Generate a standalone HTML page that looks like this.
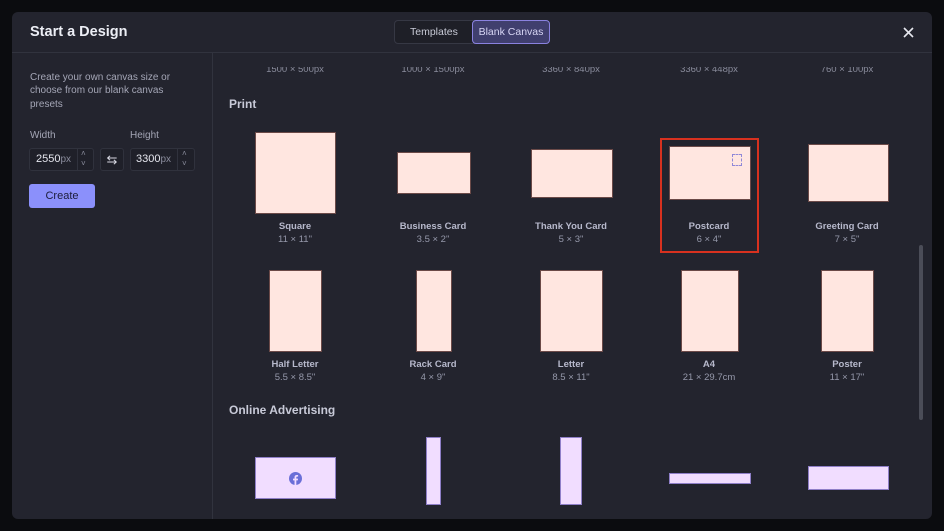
<!DOCTYPE html>
<html><head><meta charset="utf-8"><style>
*{margin:0;padding:0;box-sizing:border-box}
body{width:944px;height:531px;background:#0b0c0f;font-family:"Liberation Sans",sans-serif;position:relative;overflow:hidden}
.m{position:absolute;left:12px;top:12px;width:920px;height:507px;background:#23242e;border-radius:6px;overflow:hidden}
.a{position:absolute}
.r{position:absolute;background:#ffe6e0;border:1px solid #6b4a48}
.l{position:absolute;background:#f1ddff;border:1px solid #8f7fc8}
.n{position:absolute;width:138px;text-align:center;font-size:9.5px;font-weight:bold;color:#b7b9cc}
.d{position:absolute;width:138px;text-align:center;font-size:9.5px;color:#9598aa}
.t{position:absolute;width:138px;text-align:center;font-size:9.5px;color:#8a8c9c;top:-3px}
.in{position:absolute;top:148px;height:23px;border:1px solid #30323d;border-radius:3px;background:#1f2029;color:#e6e7ef;font-size:11px}
</style></head><body>
<div class="m"></div>
<div class="a" style="left:30px;top:24px;font-size:14.5px;font-weight:bold;color:#eceef5">Start a Design</div>
<div class="a" style="left:394px;top:20px;width:156px;height:24px;border:1px solid #363844;border-radius:4px;background:#1e1f27"></div>
<div class="a" style="left:410px;top:26px;font-size:10.5px;color:#c8cad6">Templates</div>
<div class="a" style="left:472px;top:20px;width:78px;height:24px;border:1px solid #8a82e0;border-radius:4px;background:#403f6e;color:#d8d6f5;font-size:10.5px;text-align:center;line-height:22px">Blank Canvas</div>
<svg class="a" style="left:903px;top:27px" width="11" height="11" viewBox="0 0 11 11"><path d="M1 1L10 10M10 1L1 10" stroke="#e6e7ef" stroke-width="1.6"/></svg>
<div class="a" style="left:12px;top:52px;width:920px;height:1px;background:#31333e"></div>
<div class="a" style="left:212px;top:53px;width:1px;height:466px;background:#31333e"></div>
<div class="a" style="left:30px;top:71px;width:150px;font-size:10px;line-height:13.3px;color:#a4a6b6">Create your own canvas size or choose from our blank canvas presets</div>
<div class="a" style="left:30px;top:130px;font-size:10px;color:#a4a6b6">Width</div>
<div class="a" style="left:130px;top:130px;font-size:10px;color:#a4a6b6">Height</div>
<div class="in" style="left:29px;width:65px;padding:4px 0 0 6px">2550<span style="color:#8a8c9c;font-size:10px">px</span></div>
<div class="a" style="left:77px;top:149px;width:1px;height:21px;background:#30323d"></div>
<div class="a" style="left:81px;top:149px;font-size:8px;color:#8a8c9c;line-height:10px">˄<br>˅</div>
<div class="in" style="left:100px;width:24px;text-align:center;padding-top:3px;font-size:13px;color:#d8d9e3">⇆</div>
<div class="in" style="left:130px;width:65px;padding:4px 0 0 5px">3300<span style="color:#8a8c9c;font-size:10px">px</span></div>
<div class="a" style="left:177px;top:149px;width:1px;height:21px;background:#30323d"></div>
<div class="a" style="left:182px;top:149px;font-size:8px;color:#8a8c9c;line-height:10px">˄<br>˅</div>
<div class="a" style="left:29px;top:184px;width:66px;height:24px;background:#8b90fb;border-radius:3px;color:#1c1d3a;font-size:11px;text-align:center;line-height:24px">Create</div>

<div class="a" style="left:0;top:67px;width:944px;height:12px;overflow:hidden">
<div class="t" style="left:226px">1500 × 500px</div>
<div class="t" style="left:364px">1000 × 1500px</div>
<div class="t" style="left:502px">3360 × 840px</div>
<div class="t" style="left:640px">3360 × 448px</div>
<div class="t" style="left:778px">760 × 100px</div>
</div>
<div class="a" style="left:229px;top:97px;font-size:12px;font-weight:bold;color:#c8cad8">Print</div>

<div class="r" style="left:255px;top:132px;width:81px;height:82px"></div>
<div class="r" style="left:397px;top:152px;width:74px;height:42px"></div>
<div class="r" style="left:531px;top:149px;width:82px;height:49px"></div>
<div class="r" style="left:669px;top:146px;width:82px;height:54px"></div>
<div class="a" style="left:732px;top:154px;width:10px;height:12px;border:1px dashed #8f88d8"></div>
<div class="a" style="left:660px;top:138px;width:99px;height:115px;border:2px solid #d7311f"></div>
<div class="r" style="left:808px;top:144px;width:81px;height:58px"></div>
<div class="n" style="left:226px;top:221px">Square</div><div class="d" style="left:226px;top:234px">11 × 11"</div>
<div class="n" style="left:364px;top:221px">Business Card</div><div class="d" style="left:364px;top:234px">3.5 × 2"</div>
<div class="n" style="left:502px;top:221px">Thank You Card</div><div class="d" style="left:502px;top:234px">5 × 3"</div>
<div class="n" style="left:640px;top:221px">Postcard</div><div class="d" style="left:640px;top:234px">6 × 4"</div>
<div class="n" style="left:778px;top:221px">Greeting Card</div><div class="d" style="left:778px;top:234px">7 × 5"</div>

<div class="r" style="left:269px;top:270px;width:53px;height:82px"></div>
<div class="r" style="left:416px;top:270px;width:36px;height:82px"></div>
<div class="r" style="left:540px;top:270px;width:63px;height:82px"></div>
<div class="r" style="left:681px;top:270px;width:58px;height:82px"></div>
<div class="r" style="left:821px;top:270px;width:53px;height:82px"></div>
<div class="n" style="left:226px;top:359px">Half Letter</div><div class="d" style="left:226px;top:372px">5.5 × 8.5"</div>
<div class="n" style="left:364px;top:359px">Rack Card</div><div class="d" style="left:364px;top:372px">4 × 9"</div>
<div class="n" style="left:502px;top:359px">Letter</div><div class="d" style="left:502px;top:372px">8.5 × 11"</div>
<div class="n" style="left:640px;top:359px">A4</div><div class="d" style="left:640px;top:372px">21 × 29.7cm</div>
<div class="n" style="left:778px;top:359px">Poster</div><div class="d" style="left:778px;top:372px">11 × 17"</div>

<div class="a" style="left:229px;top:403px;font-size:12px;font-weight:bold;color:#c8cad8">Online Advertising</div>
<div class="l" style="left:255px;top:457px;width:81px;height:42px"></div>
<svg class="a" style="left:289px;top:472px" width="13" height="13" viewBox="0 0 24 24"><circle cx="12" cy="12" r="12" fill="#6a6fd8"/><path d="M13.5 24v-8.5h2.8l.4-3.3h-3.2v-2c0-.9.3-1.6 1.6-1.6h1.7V5.7c-.3 0-1.3-.1-2.5-.1-2.5 0-4.1 1.5-4.1 4.2v2.4H7.4v3.3h2.8V24z" fill="#f1ddff"/></svg>
<div class="l" style="left:426px;top:437px;width:15px;height:68px"></div>
<div class="l" style="left:560px;top:437px;width:22px;height:68px"></div>
<div class="l" style="left:669px;top:473px;width:82px;height:11px"></div>
<div class="l" style="left:808px;top:466px;width:81px;height:24px"></div>
<div class="a" style="left:919px;top:245px;width:4px;height:175px;background:#4b4d58;border-radius:2px"></div>
</body></html>
